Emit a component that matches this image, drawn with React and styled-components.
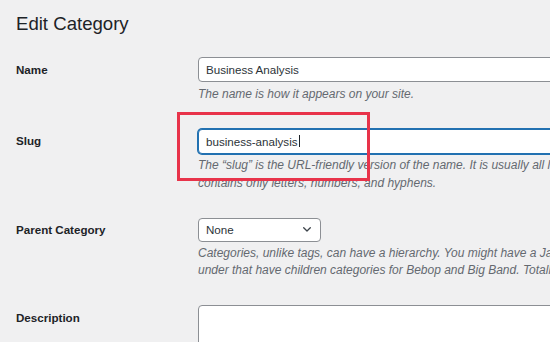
import React from "react";
import styled, { createGlobalStyle } from "styled-components";

const Global = createGlobalStyle`
  html, body {
    margin: 0;
    padding: 0;
    background: #f0f0f1;
    overflow: hidden;
  }
  body {
    font-family: "Liberation Sans", Arial, sans-serif;
    color: #1d2327;
  }
`;

const Page = styled.div`
  padding: 12px 0 0 16px;
  width: 700px;
`;

const Title = styled.h1`
  margin: 0 0 9px;
  font-size: 18.6px;
  line-height: 24px;
  font-weight: 400;
  color: #1d2327;
`;

const Row = styled.div`
  display: grid;
  grid-template-columns: 182px 460px;
`;

const Label = styled.div`
  padding-top: 16.5px;
  font-size: 11.6px;
  line-height: 15px;
  font-weight: 700;
  color: #1d2327;
`;

const Cell = styled.div`
  position: relative;
  padding: 12px 0 13.5px;
`;

const Input = styled.div`
  box-sizing: border-box;
  display: flex;
  align-items: center;
  height: 25px;
  width: 100%;
  padding: 0 7px;
  background: #fff;
  border: 1px solid ${(p) => (p.$focused ? "#2271b1" : "#8c8f94")};
  box-shadow: ${(p) => (p.$focused ? "0 0 0 1px #2271b1" : "none")};
  border-radius: 4px;
  font-size: 11.6px;
  color: #2c3338;
  white-space: nowrap;
`;

const Caret = styled.span`
  display: inline-block;
  width: 1px;
  height: 12px;
  margin-left: 1px;
  background: #1d2327;
`;

const Select = styled.div`
  box-sizing: border-box;
  display: flex;
  align-items: center;
  justify-content: space-between;
  width: 123px;
  height: 24px;
  padding: 0 9px 0 7px;
  background: #fff;
  border: 1px solid #8c8f94;
  border-radius: 4px;
  font-size: 11.6px;
  color: #2c3338;
`;

const Description = styled.p`
  margin: ${(p) => p.$gap || "3.5px"} 0 0;
  font-size: 12px;
  line-height: 17.5px;
  font-style: italic;
  color: #646970;
`;

const TextArea = styled.div`
  box-sizing: border-box;
  width: 100%;
  height: 90px;
  background: #fff;
  border: 1px solid #8c8f94;
  border-radius: 4px;
`;

const Highlight = styled.div`
  position: absolute;
  left: -21px;
  top: -4.5px;
  width: 193px;
  height: 69px;
  box-sizing: border-box;
  border: 3px solid #e8334a;
  pointer-events: none;
`;

const Chevron = () => (
  <svg width="8" height="5" viewBox="0 0 8 5" aria-hidden="true">
    <polyline
      points="0.7,0.7 4,4 7.3,0.7"
      fill="none"
      stroke="#3c434a"
      strokeWidth="1.3"
      strokeLinecap="round"
      strokeLinejoin="round"
    />
  </svg>
);

export default function App() {
  return (
    <>
      <Global />
      <Page>
        <Title>Edit Category</Title>

        <Row>
          <Label>Name</Label>
          <Cell>
            <Input>Business Analysis</Input>
            <Description>The name is how it appears on your site.</Description>
          </Cell>
        </Row>

        <Row>
          <Label>Slug</Label>
          <Cell>
            <Input $focused>
              business-analysis
              <Caret />
            </Input>
            <Description>
              The “slug” is the URL-friendly version of the name. It is usually
              all lowercase and contains only letters, numbers, and hyphens.
            </Description>
            <Highlight />
          </Cell>
        </Row>

        <Row>
          <Label>Parent Category</Label>
          <Cell>
            <Select>
              None
              <Chevron />
            </Select>
            <Description $gap="3px">
              Categories, unlike tags, can have a hierarchy. You might have a Jazz
              category, and under that have children categories for Bebop and Big
              Band. Totally optional.
            </Description>
          </Cell>
        </Row>

        <Row>
          <Label>Description</Label>
          <Cell>
            <TextArea />
          </Cell>
        </Row>
      </Page>
    </>
  );
}
